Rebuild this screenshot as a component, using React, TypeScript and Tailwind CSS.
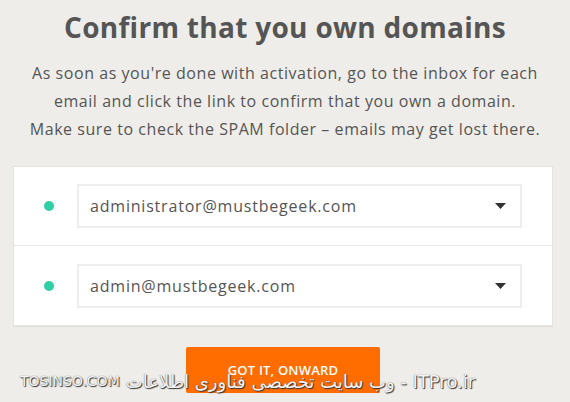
import React from "react";

const Row = ({ email, last }: { email: string; last?: boolean }) => (
  <div className={`flex items-center h-[79px] pl-[30px] pr-[30px] ${last ? "" : "border-b border-[#ebe9e6]"}`}>
    <div className="w-[10px] h-[10px] rounded-full bg-[#2fcfa5] shrink-0" />
    <div className="ml-[23px] flex-1 h-[44px] border-2 border-[#efeeec] bg-white flex items-center pl-[11px] pr-[14px]">
      <span className="flex-1 text-[16px] text-[#555] tracking-[0.8px]">{email}</span>
      <svg width="11" height="6" viewBox="0 0 11 6"><path d="M0 0 L11 0 L5.5 6 Z" fill="#333" /></svg>
    </div>
  </div>
);

export default function App() {
  return (
    <div className="relative w-[570px] h-[402px] overflow-hidden bg-[#efede9]" style={{ fontFamily: '"Open Sans", "Liberation Sans", sans-serif' }}>
      <div className="flex flex-col items-center">
        <h1 className="mt-[8px] text-[28px] leading-[38px] font-bold text-[#555] tracking-[0.3px]">Confirm that you own domains</h1>
        <p className="mt-[13px] text-center text-[16px] leading-[28px] text-[#555] tracking-[0.55px] whitespace-nowrap">
          As soon as you're done with activation, go to the inbox for each<br />
          email and click the link to confirm that you own a domain.<br />
          Make sure to check the SPAM folder – emails may get lost there.
        </p>
        <div className="mt-[23px] self-start ml-[13px] w-[540px] bg-white border border-[#e6e4e0] shadow-[0_1px_1px_rgba(0,0,0,0.05)]">
          <Row email="administrator@mustbegeek.com" />
          <Row email="admin@mustbegeek.com" last />
        </div>
        <button className="mt-[21px] self-start ml-[186px] w-[194px] h-[46px] rounded-[2px] bg-[#ff6c00] text-white text-[13px] font-semibold tracking-[0.2px] flex items-center justify-center pt-[1px]">
          GOT IT, ONWARD
        </button>
      </div>
      <div className="absolute left-[20px] top-[368px] flex items-center gap-[6px] text-[#f4f4f4] [text-shadow:1px_1px_1px_#333,0_0_1px_#555]">
        <span className="text-[14px]" style={{ fontFamily: '"DejaVu Sans", sans-serif' }}>TOSINSO.COM</span>
        <span className="text-[18px]" dir="rtl" style={{ fontFamily: '"DejaVu Sans", "Noto Sans", sans-serif' }}>ITPro.ir - وب سایت تخصصی فناوری اطلاعات</span>
      </div>
    </div>
  );
}
